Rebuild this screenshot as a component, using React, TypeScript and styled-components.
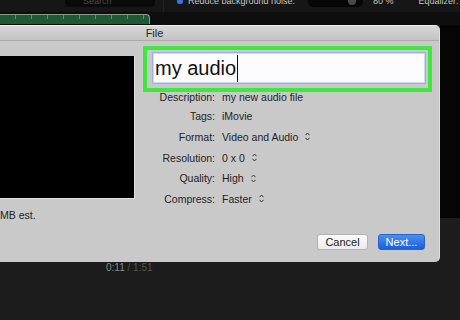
import { Fragment } from "react";
import styled, { createGlobalStyle } from "styled-components";

const Global = createGlobalStyle`
  html, body { margin: 0; padding: 0; background: #1c1c1c; }
  body { font-family: "Liberation Sans", Arial, sans-serif; }
`

const Page = styled.div`
  width: 460px;
  height: 320px;
  overflow: hidden;
  display: flex;
  flex-direction: column;
  background: #1c1c1c;
`

const Toolbar = styled.div`
  height: 12px;
  flex-shrink: 0;
  background: #161616;
  display: flex;
  align-items: center;
  overflow: hidden;
  font-size: 9px;
  color: #c4c4c4;
`

const ToolItems = styled.div`
  height: 12px;
  margin-top: -10px;
  display: flex;
  align-items: center;
`

const SearchBox = styled.div`
  margin-left: 65px;
  width: 90px;
  height: 12px;
  border-radius: 4px;
  background: #0a0a0a;
  color: #4a4a4a;
  display: flex;
  align-items: center;
  gap: 4px;
  padding-left: 18px;
  box-sizing: border-box;
`

const Divider = styled.div`
  width: 1px;
  height: 30px;
  margin-left: 8px;
  background: #222;
`

const Check = styled.div`
  width: 6px;
  height: 6px;
  margin-left: 13px;
  margin-right: 5px;
  border-radius: 2px;
  background: #3d6fd6;
`

const Slider = styled.div`
  width: 55px;
  height: 11px;
  margin-left: 13px;
  border-radius: 6px;
  background: #060606;
  display: flex;
  align-items: center;
  justify-content: flex-end;
  padding-right: 7px;
  box-sizing: border-box;
`

const Knob = styled.div`
  width: 8px;
  height: 8px;
  border-radius: 50%;
  background: #4a4a4a;
`

const ToolLabel = styled.span<{ $gap: number }>`
  margin-left: ${p => p.$gap}px;
  white-space: nowrap;
`

const Timeline = styled.div`
  height: 13px;
  flex-shrink: 0;
  background: #0e0e0e;
  display: flex;
  align-items: flex-start;
`

const Wave = styled.div`
  width: 150px;
  height: 10px;
  margin-top: 2px;
  box-sizing: border-box;
  border-top: 1px solid #8e9a90;
  border-right: 1px solid #8e9a90;
  border-top-right-radius: 4px;
  background:
    repeating-linear-gradient(90deg, transparent 0 15px, #4f9b66 15px 16px) top / 100% 4px no-repeat,
    #1d5a33;
`

const Middle = styled.div`
  display: flex;
  height: 237px;
  flex-shrink: 0;
`

const Dialog = styled.div`
  width: 440px;
  height: 237px;
  box-sizing: border-box;
  background: #c9c9c9;
  border-top: 1px solid #ececec;
  border-right: 1px solid #dedede;
  border-radius: 0 5px 5px 0;
  display: flex;
  flex-direction: column;
  color: #1e1e1e;
  font-size: 10.5px;
`

const TitleBar = styled.div`
  height: 14px;
  line-height: 14px;
  flex-shrink: 0;
  background: linear-gradient(#d7d7d7, #c3c3c3);
  border-bottom: 1px solid #aaaaaa;
  border-top-right-radius: 5px;
  text-align: center;
  padding-right: 130px;
  font-size: 11px;
  color: #262626;
`

const Body = styled.div`
  flex: 1;
  display: flex;
`

const LeftCol = styled.div`
  width: 135px;
  display: flex;
  flex-direction: column;
`

const Preview = styled.div`
  margin-top: 15px;
  height: 143px;
  background: #000;
  box-sizing: border-box;
  border-right: 1px solid #e2e2e2;
  border-bottom: 1px solid #e2e2e2;
`

const Estimate = styled.div`
  margin-top: 10px;
  line-height: 12px;
`

const RightCol = styled.div`
  width: 289px;
  margin-left: 8px;
  display: flex;
  flex-direction: column;
`

const Highlight = styled.div`
  margin-top: 5px;
  height: 46px;
  box-sizing: border-box;
  border: 4px solid #3fe83f;
  padding: 2px 2px 4px 5px;
`

const NameInput = styled.div`
  height: 100%;
  box-sizing: border-box;
  background: #fcfcfe;
  border: 1px solid #97b4e2;
  box-shadow: inset 0 0 0 1px #c9dbf3;
  font-size: 20px;
  line-height: 29px;
  padding-left: 2px;
  display: flex;
  align-items: center;
  color: #111;
`

const Caret = styled.span`
  width: 1px;
  height: 27px;
  background: #111;
  margin-left: 1px;
`

const Form = styled.div`
  margin-top: -5px;
  display: grid;
  grid-template-columns: 72px auto;
  grid-template-rows: 19px 20px 21px 21px 20px 21px;
  column-gap: 7px;
  align-items: center;
`

const Label = styled.div`
  text-align: right;
  white-space: nowrap;
`

const Value = styled.div`
  display: flex;
  align-items: center;
  gap: 7px;
  white-space: nowrap;
`

const Buttons = styled.div`
  display: flex;
  justify-content: flex-end;
  gap: 10px;
  padding: 0 14px 12px 0;
`

const Button = styled.div<{ $primary?: boolean; $w: number }>`
  width: ${p => p.$w}px;
  height: 16px;
  box-sizing: border-box;
  border-radius: 3px;
  font-size: 11px;
  line-height: 14px;
  text-align: center;
  color: ${p => (p.$primary ? "#fff" : "#1a1a1a")};
  background: ${p => (p.$primary ? "linear-gradient(#4a8ef5, #1d5fd8)" : "linear-gradient(#fbfbfb, #ececec)")};
  border: 1px solid ${p => (p.$primary ? "#2a62c8" : "#b3b3b3")};
`

const Side = styled.div`
  flex: 1;
  display: flex;
  flex-direction: column;
`

const SideBlack = styled.div`
  height: 193px;
  background: #050505;
`

const Footer = styled.div`
  flex: 1;
  padding-left: 106px;
  font-size: 10px;
  line-height: 12px;
  color: #555;
`

const Now = styled.span`
  color: #8a8a8a;
`

function Stepper() {
  return (
    <svg width="5" height="9" viewBox="0 0 5 9">
      <path d="M0.5 3.2 L2.5 1 L4.5 3.2 M0.5 5.8 L2.5 8 L4.5 5.8" fill="none" stroke="#333" strokeWidth="1" />
    </svg>
  )
}

const rows: [string, string, boolean][] = [
  ["Description:", "my new audio file", false],
  ["Tags:", "iMovie", false],
  ["Format:", "Video and Audio", true],
  ["Resolution:", "0 x 0", true],
  ["Quality:", "High", true],
  ["Compress:", "Faster", true],
]

export default function App() {
  return (
    <Page>
      <Global />
      <Toolbar>
        <ToolItems>
          <SearchBox>Search</SearchBox>
          <Divider />
          <Check />
          <ToolLabel $gap={0}>Reduce background noise:</ToolLabel>
          <Slider>
            <Knob />
          </Slider>
          <ToolLabel $gap={10}>80 %</ToolLabel>
          <ToolLabel $gap={25}>Equalizer:</ToolLabel>
        </ToolItems>
      </Toolbar>
      <Timeline>
        <Wave />
      </Timeline>
      <Middle>
        <Dialog>
          <TitleBar>File</TitleBar>
          <Body>
            <LeftCol>
              <Preview />
              <Estimate>MB est.</Estimate>
            </LeftCol>
            <RightCol>
              <Highlight>
                <NameInput>
                  my audio
                  <Caret />
                </NameInput>
              </Highlight>
              <Form>
                {rows.map(([label, value, popup]) => (
                  <Fragment key={label}>
                    <Label>{label}</Label>
                    <Value>
                      {value}
                      {popup && <Stepper />}
                    </Value>
                  </Fragment>
                ))}
              </Form>
            </RightCol>
          </Body>
          <Buttons>
            <Button $w={51}>Cancel</Button>
            <Button $w={47} $primary>Next...</Button>
          </Buttons>
        </Dialog>
        <Side>
          <SideBlack />
        </Side>
      </Middle>
      <Footer>
        <Now>0:11</Now> / 1:51
      </Footer>
    </Page>
  )
}
